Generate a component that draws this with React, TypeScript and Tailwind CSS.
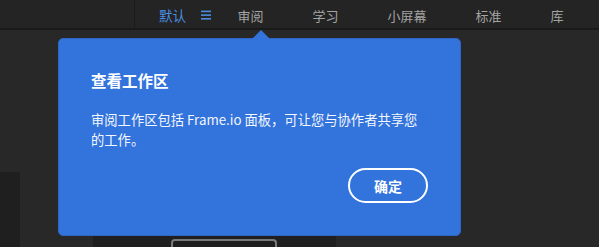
const tabs = ["审阅", "学习", "小屏幕", "标准", "库"]

function MenuIcon() {
  return (
    <svg width="10" height="10" viewBox="0 0 10 10" className="ml-[15px] mr-[2px] mt-[1px] shrink-0">
      <rect x="0" y="0.6" width="10" height="1.6" fill="#4a8ee0" />
      <rect x="0" y="4.3" width="10" height="1.6" fill="#4a8ee0" />
      <rect x="0" y="8" width="10" height="1.6" fill="#4a8ee0" />
    </svg>
  )
}

export default function App() {
  return (
    <div
      className="relative flex h-[247px] w-full flex-col overflow-hidden bg-[#282828]"
      style={{ fontFamily: '"Noto Sans CJK SC", "Noto Sans", sans-serif' }}
    >
      {/* Workspace bar */}
      <div className="flex h-[28px] shrink-0 items-stretch whitespace-nowrap bg-[#242424]">
        <div className="w-[135px] shrink-0 border-r border-[#1a1a1a]" />
        <div className="flex shrink-0 items-center pl-[24px] text-[13.5px] leading-none text-[#4a8ee0]">
          <span className="mt-[3px]">默认</span>
          <MenuIcon />
        </div>
        {tabs.map((t) => (
          <div
            key={t}
            className="flex shrink-0 items-center px-[24.5px] text-[13px] leading-none text-[#a3a3a3]"
          >
            <span className="mt-[3px]">{t}</span>
          </div>
        ))}
      </div>
      <div className="h-[2px] shrink-0 bg-[#1a1a1a]" />

      {/* Panels underneath */}
      <div className="flex flex-1">
        <div className="mt-[142px] w-[20px] rounded-tr-[2px] bg-[#1f1f1f]" />
        <div className="ml-[73px] mt-[170px] flex w-[243px] bg-[#1f1f1f] pl-[78px] pt-[39px]">
          <div className="w-[106px] rounded-t-[4px] border-2 border-b-0 border-[#7a7a7a] bg-[#1e1e1e]" />
        </div>
      </div>

      {/* Popover */}
      <div className="absolute left-[58px] top-[38px] h-[198px] w-[403px] rounded-[5px] border border-[#2d66c4] bg-[#3273dc] pl-[32px] pr-[32px] pt-[27px] text-white">
        <div className="absolute left-[193px] top-[-9px] h-0 w-0 border-b-[9px] border-l-[9px] border-r-[9px] border-b-[#3273dc] border-l-transparent border-r-transparent" />
        <div className="text-[15.5px] font-bold leading-[28px]">查看工作区</div>
        <div className="mt-[16px] whitespace-nowrap text-[13.3px] leading-[19.5px] text-[#f4f7fd]">
          审阅工作区包括 Frame.io 面板，可让您与协作者共享您
          <br />
          的工作。
        </div>
        <div className="mt-[19px] flex justify-end">
          <button className="flex h-[35px] w-[80px] items-center justify-center rounded-full border-2 border-white text-[14px] font-bold leading-none text-white">
            确定
          </button>
        </div>
      </div>
    </div>
  )
}
